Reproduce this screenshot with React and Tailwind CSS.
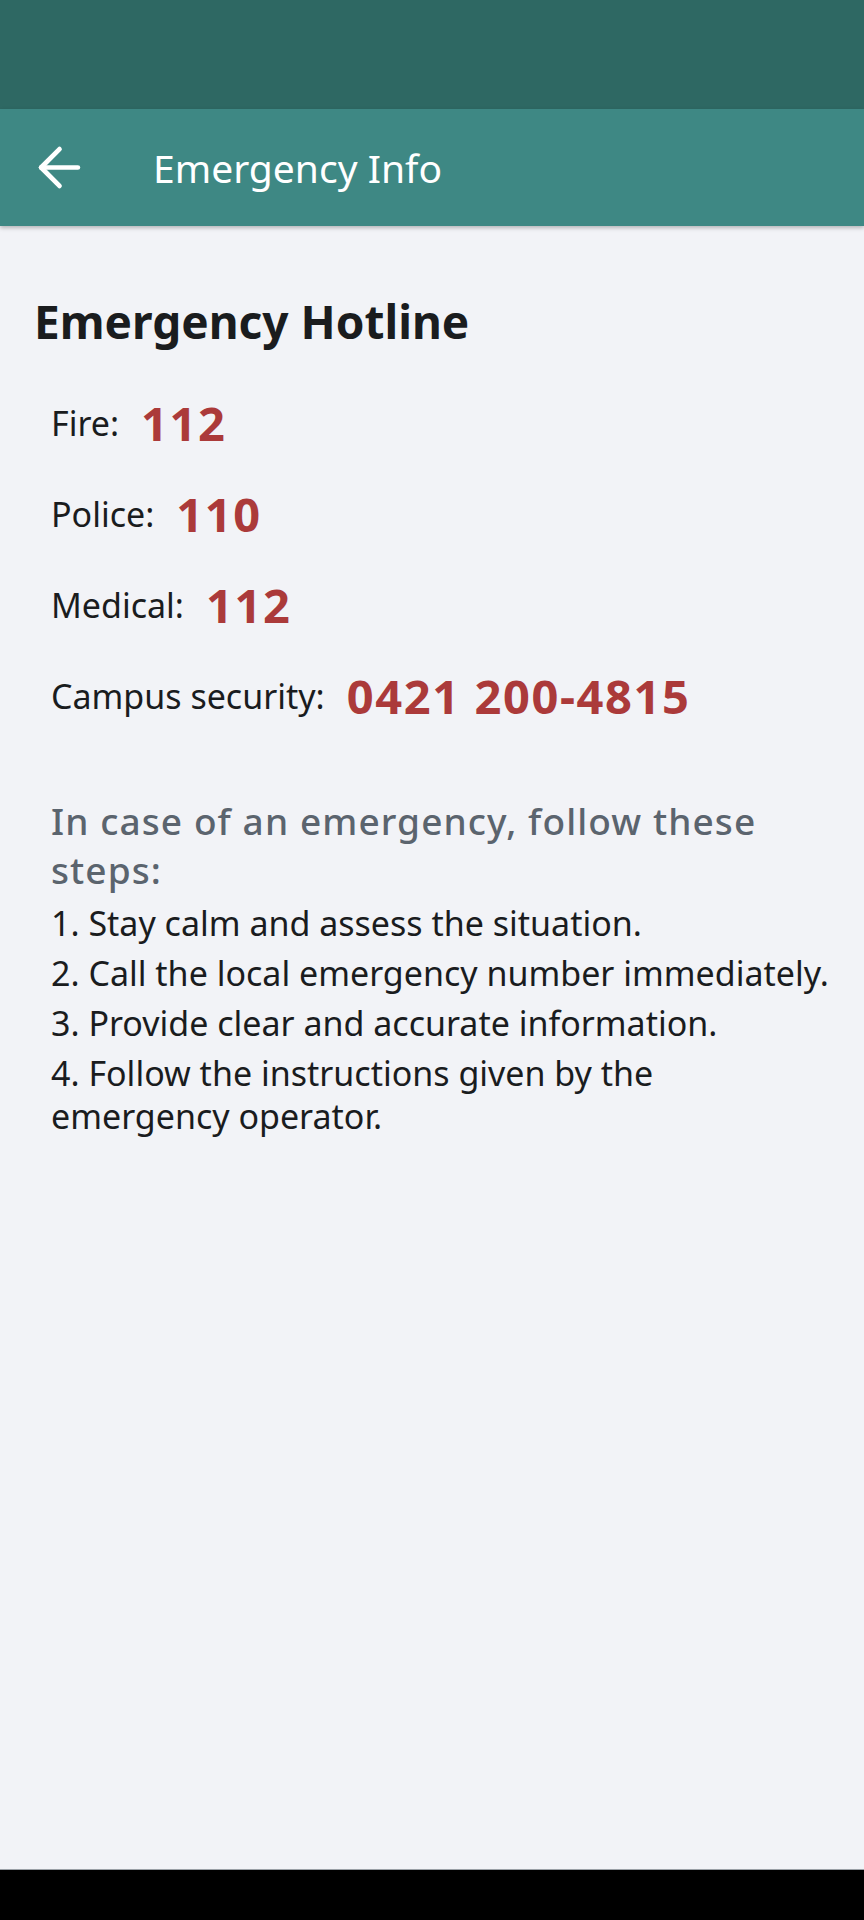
import React from "react";
import { ArrowLeft } from "lucide-react";

const rows = [
  { label: "Fire:", value: "112" },
  { label: "Police:", value: "110" },
  { label: "Medical:", value: "112" },
  { label: "Campus security:", value: "0421 200-4815" },
];

const steps = [
  "1. Stay calm and assess the situation.",
  "2. Call the local emergency number immediately.",
  "3. Provide clear and accurate information.",
  "4. Follow the instructions given by the emergency operator.",
];

export default function App() {
  return (
    <div
      className="w-[864px] h-[1920px] flex flex-col bg-[#f2f3f7] overflow-hidden"
      style={{ fontFamily: '"Noto Sans", sans-serif' }}
    >
      <div className="h-[109px] shrink-0 bg-[#2e6863]" />
      <div className="h-[117px] shrink-0 bg-[#3e8884] flex items-center shadow-[0_2px_4px_rgba(0,0,0,0.25)] relative z-10">
        <div className="w-[153px] shrink-0 flex items-center pl-[28px]">
          <ArrowLeft size={63} strokeWidth={1.8} color="#ffffff" />
        </div>
        <div className="text-white text-[39px] leading-none">Emergency Info</div>
      </div>
      <div className="flex-1 flex flex-col pl-[34px] pr-[31px] pt-[68px]">
        <h1 className="text-[46px] font-bold leading-[1.2] text-[#1a1c1e]">Emergency Hotline</h1>
        <div className="flex flex-col pl-[17px] mt-[28px]">
          {rows.map((r) => (
            <div key={r.label} className="flex items-center gap-[22px] h-[91px]">
              <span className="text-[34px] leading-[46px] text-[#1a1c1e]">{r.label}</span>
              <span className="text-[47px] leading-[56px] font-bold text-[#ab3a3a] tracking-[1.6px]">
                {r.value}
              </span>
            </div>
          ))}
        </div>
        <div className="pl-[17px] mt-[55px]">
          <p className="text-[37px] leading-[49px] font-medium tracking-[1.1px] text-[#5b646e]">
            In case of an emergency, follow these steps:
          </p>
          <div className="mt-[8px] flex flex-col gap-[7px]">
            {steps.map((s) => (
              <p key={s} className="text-[34px] leading-[43px] text-[#1a1c1e]">
                {s}
              </p>
            ))}
          </div>
        </div>
      </div>
      <div className="h-[51px] shrink-0 bg-black border-t border-[#9aa0a6]" />
    </div>
  );
}
